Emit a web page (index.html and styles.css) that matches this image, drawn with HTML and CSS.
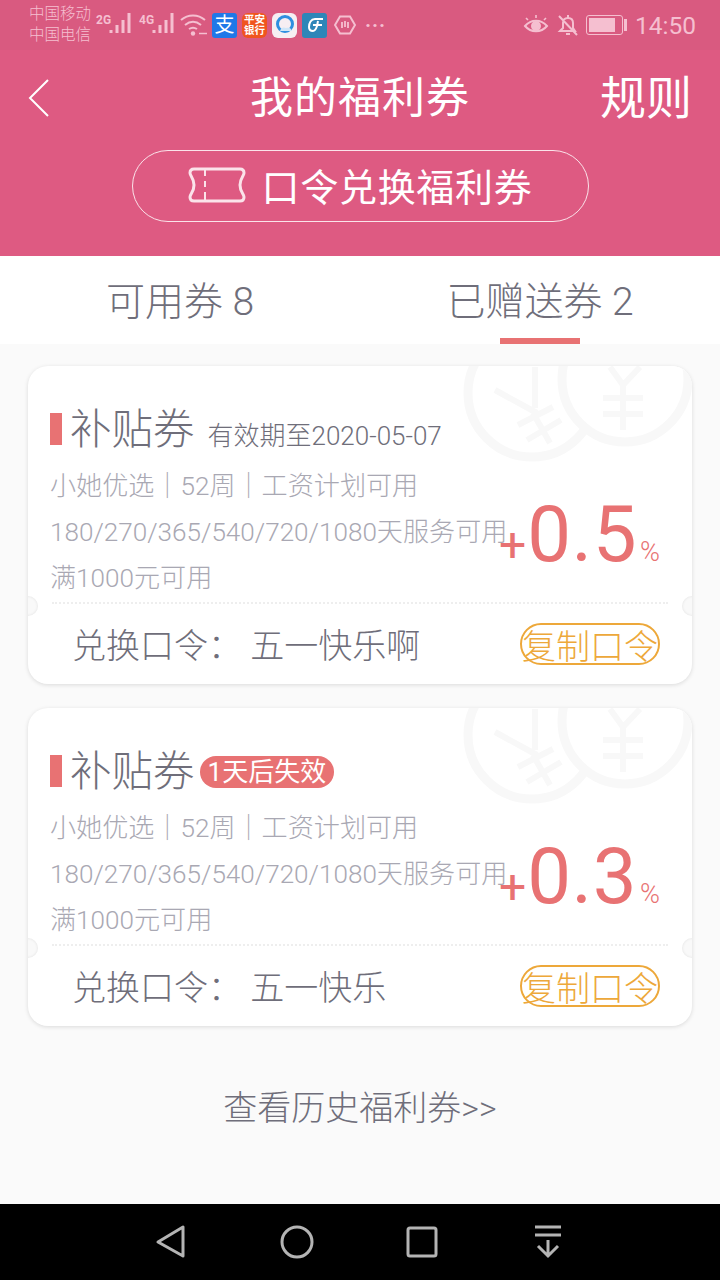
FILE: index.html
```html
<!DOCTYPE html>
<html>
	<head>
		<meta charset="utf-8">
		<title>我的福利券</title>
		<link rel="stylesheet" href="styles.css">
	</head>
	<body>
		<div class="page">
			<div class="top">
				<div class="status">
					<div class="carrier"><span>中国移动</span><span>中国电信</span></div>
					<div class="sig"><i class="net">2G</i>
						<svg width="24" height="24" viewBox="0 0 24 24"><path d="M3 21v-3M9 21v-8M15 21v-13M21 21v-20" stroke="#f5bfd0" stroke-width="3"/></svg>
					</div>
					<div class="sig"><i class="net">4G</i>
						<svg width="24" height="24" viewBox="0 0 24 24"><path d="M3 21v-3M9 21v-8M15 21v-13M21 21v-20" stroke="#f5bfd0" stroke-width="3"/></svg>
					</div>
					<svg class="wifi" width="28" height="24" viewBox="0 0 28 24" fill="none" stroke="#f5bfd0" stroke-width="2"><path d="M1 7c7-6 17-6 24 0M5 12c5-4 11-4 16 0M9 16c3-2 5-2 8 0"/><circle cx="13" cy="20.500" r="2.200" fill="#f5bfd0" stroke="none"/><path d="M19 20.500h8" stroke-width="1.500"/></svg>
					<div class="app alipay">支</div>
					<div class="app pingan">平安<br>银行</div>
					<div class="app qq"><svg width="22" height="22" viewBox="0 0 22 22"><circle cx="11" cy="10" r="7.500" fill="none" stroke="#2f8fe0" stroke-width="3"/><path d="M6 17c1-4 4-4 6-3 3-1 5 0 6 3z" fill="#cfe6f8"/></svg></div>
					<div class="app gf"><svg width="22" height="22" viewBox="0 0 22 22" fill="none" stroke="#fff" stroke-width="2"><path d="M19 5H11C7 5 5 9 5 13c0 3 2 4 4 4s3-2 4-5l1-5M9 11h9"/></svg></div>
					<svg class="stop" width="22" height="22" viewBox="0 0 22 22" fill="none" stroke="#f5bfd0" stroke-width="2"><path d="M6 2.500h10l5 8.500-5 8.500H6L1 11z"/><path d="M8 14V8M11 13V7M14 14V8" stroke-width="1.800"/></svg>
					<div class="dots">···</div>
					<div class="status-right">
						<svg width="26" height="24" viewBox="0 0 26 24" fill="none" stroke="#f5bfd0" stroke-width="2"><path d="M2 13c6-7 16-7 22 0-6 7-16 7-22 0z"/><circle cx="13" cy="13" r="4" fill="#f5bfd0"/><path d="M5 7 3 5M13 5V2M21 7l2-2" stroke-width="1.600"/></svg>
						<svg width="22" height="24" viewBox="0 0 22 24" fill="none" stroke="#f5bfd0" stroke-width="2"><path d="M3 18h15l-2-3V10c0-3-2-5-5-5s-5 2-5 5v5zM9 21h4M11 2v3M2 3l18 19"/></svg>
						<div class="batt"><div class="batt-fill"></div></div><div class="batt-cap"></div>
						<span class="time">14:50</span>
					</div>
				</div>
				<div class="bar">
					<svg class="back" width="24" height="40" viewBox="0 0 24 40" fill="none" stroke="#fff" stroke-width="2"><path d="M21 2 3 20l18 18"/></svg>
					<h1>我的福利券</h1>
					<a class="rule">规则</a>
				</div>
				<div class="redeem">
					<svg width="58" height="36" viewBox="0 0 58 36" fill="none" stroke="#fbe3ea" stroke-width="3"><path d="M6 2h46c3 0 4 2 4 4 0 3-4 5-4 12s4 9 4 12c0 2-1 4-4 4H6c-3 0-4-2-4-4 0-3 4-5 4-12S2 9 2 6c0-2 1-4 4-4z"/><path d="M17 3v6M17 14v6M17 25v8" stroke-width="2"/></svg>
					<span class="redeem-text">口令兑换福利券</span>
				</div>
			</div>
			<div class="tabs">
				<div class="tab">可用券 8</div>
				<div class="tab on">已赠送券 2</div>
			</div>
			<div class="list">
				<div class="card">
					<svg class="coins" width="240" height="100" viewBox="0 0 240 100" fill="none" stroke="#f8f8f8"><circle cx="80" cy="27" r="64" stroke-width="9"/><circle cx="173" cy="13" r="63" stroke-width="9" fill="#fff"/><path stroke-width="6" d="M43 24l42 23M83 1v41M81 47l17 30M66 59l35-18M75 74l34-20M158 1l13 18 17-18M171 19v45M151 32h40M151 48h40"/></svg>
					<div class="info">
						<div class="head"><b class="mark"></b><span class="name">补贴券</span><span class="date">有效期至2020-05-07</span></div>
						<p>小她优选｜52周｜工资计划可用</p>
						<p>180/270/365/540/720/1080天服务可用</p>
						<p>满1000元可用</p>
						<div class="rate"><em>+</em><strong>0.5</strong><small>%</small></div>
					</div>
					<div class="code">
						<span class="code-text">兑换口令： <span class="code-val">五一快乐啊</span></span>
						<a class="copy">复制口令</a>
					</div>
				</div>
				<div class="card">
					<svg class="coins" width="240" height="100" viewBox="0 0 240 100" fill="none" stroke="#f8f8f8"><circle cx="80" cy="27" r="64" stroke-width="9"/><circle cx="173" cy="13" r="63" stroke-width="9" fill="#fff"/><path stroke-width="6" d="M43 24l42 23M83 1v41M81 47l17 30M66 59l35-18M75 74l34-20M158 1l13 18 17-18M171 19v45M151 32h40M151 48h40"/></svg>
					<div class="info">
						<div class="head"><b class="mark"></b><span class="name">补贴券</span><span class="tag">1天后失效</span></div>
						<p>小她优选｜52周｜工资计划可用</p>
						<p>180/270/365/540/720/1080天服务可用</p>
						<p>满1000元可用</p>
						<div class="rate"><em>+</em><strong>0.3</strong><small>%</small></div>
					</div>
					<div class="code">
						<span class="code-text">兑换口令： <span class="code-val">五一快乐</span></span>
						<a class="copy">复制口令</a>
					</div>
				</div>
			</div>
			<div class="history">查看历史福利券&gt;&gt;</div>
			<div class="nav">
				<svg width="32" height="36" viewBox="0 0 32 36" fill="none" stroke="#b4b4b4" stroke-width="3" stroke-linejoin="round"><path d="M28 3v29L3 18z"/></svg>
				<svg width="36" height="36" viewBox="0 0 36 36" fill="none" stroke="#b4b4b4" stroke-width="3"><circle cx="18" cy="18" r="15"/></svg>
				<svg width="32" height="32" viewBox="0 0 32 32" fill="none" stroke="#b4b4b4" stroke-width="3" stroke-linejoin="round"><rect x="2" y="2" width="28" height="28" rx="2"/></svg>
				<svg width="30" height="34" viewBox="0 0 30 34" fill="none" stroke="#b4b4b4" stroke-width="3"><path d="M2 2h26M2 10h26M15 15v16M5 21l10 10 10-10"/></svg>
			</div>
		</div>
	</body>
</html>
```

FILE: styles.css
```css
*{box-sizing: border-box;}
body{margin: 0; background-color: #fafafa; font-family: Roboto, "Noto Sans CJK SC", sans-serif; font-weight: 300; color: #6f6e7a;}
.page{width: 720px; height: 1280px; display: flex; flex-direction: column; overflow: hidden;}
.top{height: 256px; background-color: #de5a82; color: #fff;}
.status{height: 50px; background-color: #d95a80; display: flex; align-items: center; padding: 0 24px 0 29px; color: #f5bfd0;}
.carrier{display: flex; flex-direction: column; font-size: 15.500px; line-height: 21px; width: 67px;}
.sig{display: flex; width: 43px; height: 26px;}
.net{font-style: normal; font-weight: 700; font-size: 12px; line-height: 10px; margin-top: 3px; width: 13px; flex-shrink: 0;}
.sig svg{flex-shrink: 0; margin-left: -1px;}
.wifi{margin: 0 4px 0 -2px;}
.app{width: 25px; height: 25px; border-radius: 3px; margin-right: 5px; display: flex; align-items: center; justify-content: center;}
.alipay{background-color: #1f78e8; color: #fff; font-size: 20px; line-height: 25px; font-weight: 400;}
.pingan{background-color: #f0551f; color: #fff; font-size: 10.500px; line-height: 11px; text-align: center; border-radius: 6px; font-weight: 700;}
.qq{background-color: #f6eef2; border-radius: 6px;}
.gf{background-color: #2d86b8;}
.stop{margin-left: 2px;}
.dots{font-size: 20px; line-height: 20px; margin-left: 9px; letter-spacing: 1px; font-weight: 700;}
.status-right{margin-left: auto; display: flex; align-items: center;}
.status-right svg{margin-right: 8px;}
.batt{width: 37px; height: 20px; border: 1.500px solid #f5bfd0; border-radius: 3px; padding: 2px; margin-left: -1px;}
.batt-fill{height: 100%; width: 85%; background-color: #f5bfd0;}
.batt-cap{width: 3px; height: 12px; background-color: #f5bfd0; margin-left: 1px;}
.time{font-size: 24.500px; margin-left: 8px; font-weight: 400;}
.bar{height: 100px; display: flex; align-items: center; justify-content: space-between; position: relative; padding: 0 28px 4px 27px;}
.bar h1{position: absolute; left: 0; right: 0; top: 19px; margin: 0; text-align: center; font-size: 43px; line-height: 58px; font-weight: 400; letter-spacing: 1px;}
.rule{font-size: 46px; line-height: 60px; font-weight: 400; position: relative;}
.redeem{height: 72px; margin: 0 auto; width: 457px; border: 1px solid #fbe3ea; border-radius: 36px; display: flex; align-items: center; justify-content: center; gap: 16px; font-size: 38px; font-weight: 400; letter-spacing: 0.700px;}
.redeem svg{margin: -2px 0 0 0;}
.redeem-text{margin-top: -3px;}
.tabs{height: 88px; background-color: #fff; display: flex; flex-shrink: 0;}
.tab{width: 360px; text-align: center; font-size: 39px; line-height: 92px; position: relative;}
.tab.on:after{content: ""; position: absolute; left: 140px; bottom: 0; width: 80px; height: 6px; background-color: #e87273;}
.list{padding: 22px 28px 0; display: flex; flex-direction: column; gap: 24px;}
.card{height: 318px; background-color: #fff; border-radius: 20px; box-shadow: 0 1px 4px rgba(0,0,0,0.13); position: relative; overflow: hidden;}
.card:before,.card:after{content: ""; position: absolute; z-index: 2; top: 230px; width: 20px; height: 20px; border-radius: 50%; background-color: #f9f9f9; box-shadow: inset 0 0 3px rgba(0,0,0,0.1);}
.card:before{left: -10px;}
.card:after{right: -10px;}
.coins{position: absolute; right: 0; top: 0;}
.info{height: 238px; margin: 0 24px; border-bottom: 2px dotted #eee; position: relative; padding-top: 38px;}
.head{display: flex; align-items: center; height: 50px; margin-left: -2px; margin-bottom: 9px;}
.mark{width: 12px; height: 32px; background-color: #e87273; margin-right: 8px;}
.name{font-size: 41.500px; line-height: 50px; margin-top: 2px;}
.date{font-size: 26px; margin-left: 13px; margin-top: 8px;}
.tag{background-color: #e87273; color: #fff; font-size: 26px; line-height: 32px; padding: 0 8px; border-radius: 16px; margin-left: 5px; margin-top: 2px; font-weight: 400;}
.info p{margin: 0 0 0 -2px; font-size: 26.100px; line-height: 46px; color: #a9a8b3; white-space: nowrap;}
.rate{position: absolute; right: 8px; top: 124px; color: #e87273; display: flex; align-items: baseline; font-weight: 400;}
.rate em{font-style: normal; font-size: 48px; margin-right: 1px;}
.rate strong{font-weight: 400; font-size: 78px; line-height: 90px; letter-spacing: 0.500px;}
.rate small{font-size: 27px; margin-left: 3px; font-weight: 300;}
.code{height: 78px; display: flex; align-items: center; justify-content: space-between; padding: 0 32px 0 44px;}
.code-text{font-size: 34px;}
.copy{width: 140px; height: 42px; border: 2px solid #eda83a; border-radius: 21px; color: #eda83a; font-size: 34px; line-height: 44px; text-align: center; white-space: nowrap; display: flex; justify-content: center; margin-top: 1px;}
.history{text-align: center; font-size: 34px; line-height: 44px; margin-top: 60px; flex: 1;}
.nav{height: 76px; background-color: #000; display: flex; align-items: center; gap: 91.500px; padding-left: 155px;}
.nav svg:last-child{margin-left: 3.500px;}
```
